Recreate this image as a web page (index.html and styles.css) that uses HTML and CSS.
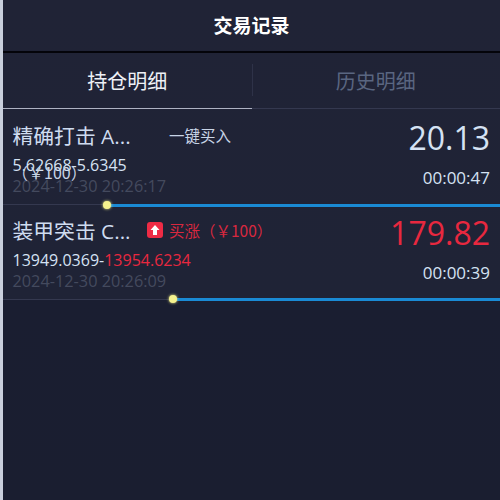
FILE: index.html
```html
<!DOCTYPE html>
<html lang="zh">
<head>
<meta charset="utf-8">
<title>交易记录</title>
<link rel="stylesheet" href="styles.css">
</head>
<body>
<div class="page">
  <header class="header"><span class="header-title">交易记录</span></header>
  <nav class="tabs">
    <div class="tab tab-active">持仓明细</div>
    <div class="tab tab-idle"><span class="tab-sep"></span>历史明细</div>
  </nav>
  <section class="row row-first">
    <div class="main">
      <div class="title-line">
        <span class="name">精确打击 A...</span>
        <span class="action">一键买入</span>
      </div>
      <div class="prices">5.62668-5.6345</div>
      <div class="overflow-amount">（￥100）</div>
      <div class="date">2024-12-30 20:26:17</div>
    </div>
    <div class="side">
      <div class="value">20.13</div>
      <div class="timer">00:00:47</div>
    </div>
    <div class="progress progress-first"><span class="dot"></span></div>
  </section>
  <section class="row row-second">
    <div class="main">
      <div class="title-line">
        <span class="name">装甲突击 C...</span>
        <span class="badge">
          <svg class="badge-icon" width="16" height="16" viewBox="0 0 16 16"><rect width="16" height="16" rx="3" fill="#ee2b45"/><path d="M8 3 L12.5 8 H10 V13 H6 V8 H3.5 Z" fill="#fff"/></svg>
          <span class="badge-text">买涨（￥100）</span>
        </span>
      </div>
      <div class="prices">13949.0369-<span class="red">13954.6234</span></div>
      <div class="date">2024-12-30 20:26:09</div>
    </div>
    <div class="side">
      <div class="value red">179.82</div>
      <div class="timer">00:00:39</div>
    </div>
    <div class="progress progress-second"><span class="dot"></span></div>
  </section>
</div>
</body>
</html>
```
FILE: styles.css
```css
* { box-sizing: border-box; }
html, body { margin: 0; height: 100%; }
body { background: #c9cfdc; padding-left: 3px; overflow: hidden; }
.page {
  height: 500px;
  background: linear-gradient(#202336 0, #1f2336 300px, #1a1e31 300px, #1a1e30 100%);
  font-family: "Open Sans", "Noto Sans CJK SC", sans-serif;
  color: #d5e2f3;
}
.header {
  height: 53px;
  border-bottom: 2px solid #04040a;
  display: flex;
  justify-content: center;
  padding-top: 11px;
  font-family: "Noto Sans CJK SC", sans-serif;
  font-size: 19px;
  line-height: 28px;
  font-weight: 700;
  color: #fff;
}
.tabs {
  height: 56px;
  display: flex;
  border-bottom: 1px solid #34384f;
}
.tab {
  flex: 1;
  display: flex;
  align-items: center;
  justify-content: center;
  font-family: "Noto Sans CJK SC", sans-serif;
  font-size: 20px;
  position: relative;
}
.tab-active { color: #eef1f6; border-bottom: 1px solid #aeb2c3; margin-bottom: -1px; }
.tab-idle { color: #5a6681; }
.tab-sep {
  position: absolute;
  left: 0;
  top: 11px;
  height: 32px;
  border-left: 1px solid #2e3248;
}
.row {
  position: relative;
  display: flex;
  justify-content: space-between;
  padding: 0 10px 0 9.5px;
}
.row-first { height: 96px; }
.row-second { height: 95px; }
.main { min-width: 0; padding-top: 13px; }
.row-second .main { padding-top: 12px; }
.title-line { display: flex; align-items: center; height: 26px; }
.name { font-size: 20.8px; color: #cfdcf0; width: 134.5px; white-space: nowrap; }
.action {
  font-family: "Noto Sans CJK SC", sans-serif;
  font-size: 15.5px;
  color: #c8d4e6;
  margin-left: 22px;
}
.badge { display: flex; align-items: center; gap: 6px; }
.badge-text { font-family: "Noto Sans CJK SC", sans-serif; font-size: 15.5px; color: #d8283f; }
.prices { font-size: 16px; line-height: 20px; margin-top: 7px; color: #d5e2f3; white-space: nowrap; }
.overflow-amount {
  position: absolute;
  left: 9px;
  top: 53px;
  font-family: "Noto Sans CJK SC", "Open Sans", sans-serif;
  font-size: 16px;
  line-height: 20px;
  color: #c8d4e6;
}
.date { font-size: 16.3px; line-height: 22px; color: #444a5e; white-space: nowrap; }
.side { text-align: right; padding-top: 7px; }
.row-second .side { padding-top: 6px; }
.value { font-size: 32px; line-height: 44px; color: #d5e2f3; }
.timer { font-size: 17px; line-height: 22px; margin-top: 7px; color: #d5e2f3; }
.red { color: #e8283f; }
.row-second .value { color: #e8283f; }
.progress {
  position: absolute;
  right: 0;
  height: 3px;
  background: #1a8ad4;
  z-index: 1;
}
.progress-first { left: 104px; bottom: -2px; }
.progress-second { left: 170px; bottom: -1px; }
.row::after {
  content: "";
  position: absolute;
  left: 0;
  right: 0;
  bottom: 0;
  border-bottom: 1px solid #34384f;
}
.dot {
  position: absolute;
  left: -4px;
  top: -3.5px;
  width: 8px;
  height: 8px;
  border-radius: 50%;
  background: #f5f28e;
  box-shadow: 0 0 3px #f5f28e;
}
```
